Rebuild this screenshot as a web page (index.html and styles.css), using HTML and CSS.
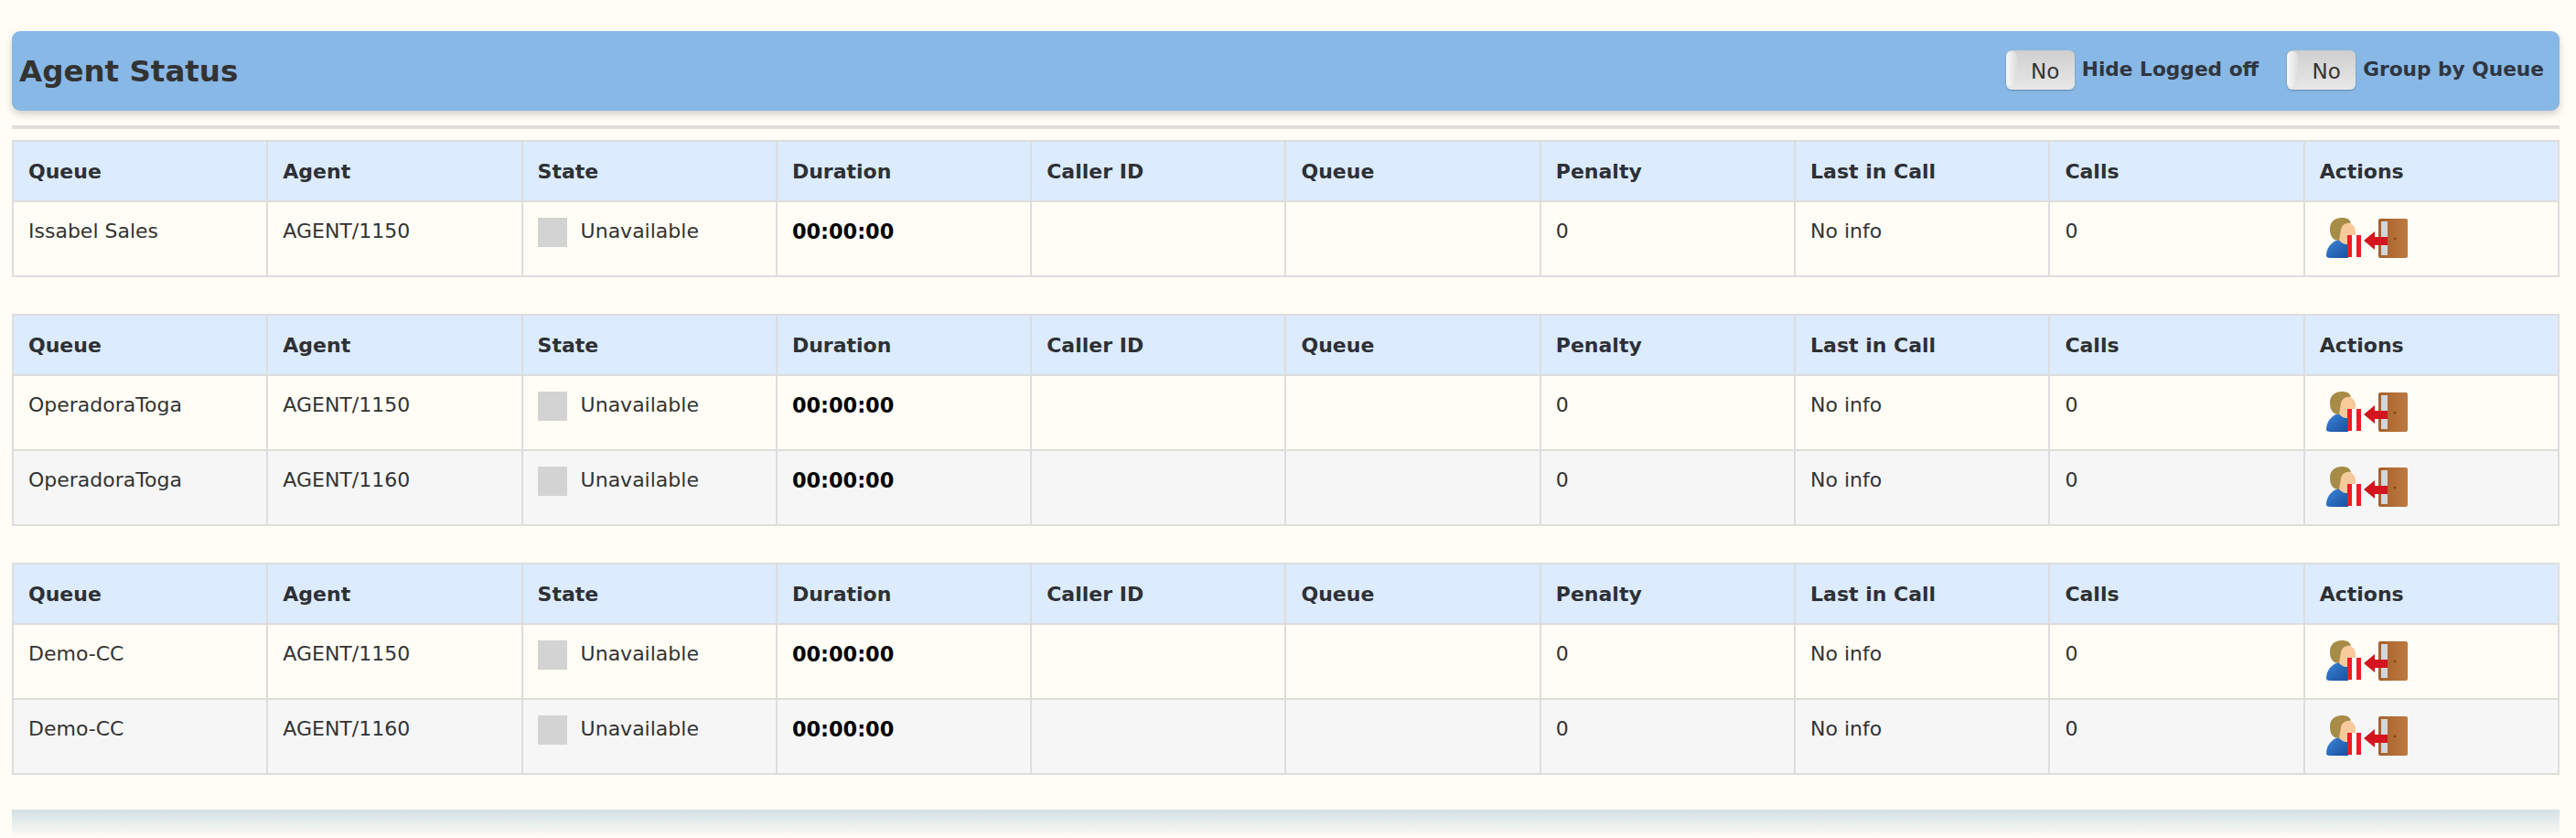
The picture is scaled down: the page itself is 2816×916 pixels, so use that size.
FILE: index.html
```html
<!DOCTYPE html>
<html lang="en">
<head>
  <meta charset="UTF-8">
  <title>Agent Status</title>
  <link rel="stylesheet" href="styles.css">
</head>
<body>
  <svg class="icon-defs" width="0" height="0">
    <defs>
      <linearGradient id="doorGrad" x1="0" x2="1" y1="0" y2="0">
        <stop offset="0" stop-color="#a5602b"/>
        <stop offset="1" stop-color="#bd7a40"/>
      </linearGradient>
      <linearGradient id="bodyGrad" x1="0" x2="1" y1="0" y2="1">
        <stop offset="0" stop-color="#3d86d8"/>
        <stop offset="1" stop-color="#174f9f"/>
      </linearGradient>
      <symbol id="logoutIcon" viewBox="0 0 92 46">
        <path d="M1 42 C1 33 6 27 14 24 L24 24 L25 44 L8 44 C4 44 2 44 1 42 Z" fill="url(#bodyGrad)"/>
        <path d="M12 14 C12 8 16 5 22 5 C28 5 33 9 33 15 L33 22 C31 27 27 29 22 29 C16 28 12 22 12 14 Z" fill="#f7c99b"/>
        <path d="M5 12 C5 4 11 0 18 0 C24 0 27 2 28 6 C22 5 18 8 17 13 L15 25 L10 24 C6 21 5 17 5 12 Z" fill="#a68c46"/>
        <path d="M24 19 H39 V43 H24 Z" fill="#fff"/>
        <path d="M24 19 H29 V43 H24 Z M34 19 H39 V43 H34 Z" fill="#ee1c25"/>
        <path d="M60 1 H88 Q90 1 90 3 V42 Q90 44 88 44 H60 Q58 44 58 42 V3 Q58 1 60 1 Z" fill="url(#doorGrad)"/>
        <path d="M61 4 H68 V41 H61 Z" fill="#d2d5da"/>
        <circle cx="76" cy="23" r="1.3" fill="#7a3f15"/>
        <path d="M42 25 L54 15 V21 H68 V30 H54 V35 Z" fill="#d4141e"/>
      </symbol>
    </defs>
  </svg>

  <div class="title-bar">
    <h1 class="title">Agent Status</h1>
    <div class="switches">
      <div class="switch-item">
        <span class="toggle"><span class="toggle-knob"></span><span class="toggle-text">No</span></span>
        <span class="switch-label">Hide Logged off</span>
      </div>
      <div class="switch-item">
        <span class="toggle"><span class="toggle-knob"></span><span class="toggle-text">No</span></span>
        <span class="switch-label">Group by Queue</span>
      </div>
    </div>
  </div>
  <hr class="rule">

  <table class="agents">
    <thead>
      <tr><th>Queue</th><th>Agent</th><th>State</th><th>Duration</th><th>Caller ID</th><th>Queue</th><th>Penalty</th><th>Last in Call</th><th>Calls</th><th>Actions</th></tr>
    </thead>
    <tbody>
      <tr>
        <td>Issabel Sales</td><td>AGENT/1150</td>
        <td><span class="state"><span class="state-box"></span>Unavailable</span></td>
        <td class="duration">00:00:00</td><td></td><td></td><td>0</td><td>No info</td><td>0</td>
        <td class="actions"><svg class="logout"><use href="#logoutIcon"/></svg></td>
      </tr>
    </tbody>
  </table>

  <table class="agents">
    <thead>
      <tr><th>Queue</th><th>Agent</th><th>State</th><th>Duration</th><th>Caller ID</th><th>Queue</th><th>Penalty</th><th>Last in Call</th><th>Calls</th><th>Actions</th></tr>
    </thead>
    <tbody>
      <tr>
        <td>OperadoraToga</td><td>AGENT/1150</td>
        <td><span class="state"><span class="state-box"></span>Unavailable</span></td>
        <td class="duration">00:00:00</td><td></td><td></td><td>0</td><td>No info</td><td>0</td>
        <td class="actions"><svg class="logout"><use href="#logoutIcon"/></svg></td>
      </tr>
      <tr>
        <td>OperadoraToga</td><td>AGENT/1160</td>
        <td><span class="state"><span class="state-box"></span>Unavailable</span></td>
        <td class="duration">00:00:00</td><td></td><td></td><td>0</td><td>No info</td><td>0</td>
        <td class="actions"><svg class="logout"><use href="#logoutIcon"/></svg></td>
      </tr>
    </tbody>
  </table>

  <table class="agents">
    <thead>
      <tr><th>Queue</th><th>Agent</th><th>State</th><th>Duration</th><th>Caller ID</th><th>Queue</th><th>Penalty</th><th>Last in Call</th><th>Calls</th><th>Actions</th></tr>
    </thead>
    <tbody>
      <tr>
        <td>Demo-CC</td><td>AGENT/1150</td>
        <td><span class="state"><span class="state-box"></span>Unavailable</span></td>
        <td class="duration">00:00:00</td><td></td><td></td><td>0</td><td>No info</td><td>0</td>
        <td class="actions"><svg class="logout"><use href="#logoutIcon"/></svg></td>
      </tr>
      <tr>
        <td>Demo-CC</td><td>AGENT/1160</td>
        <td><span class="state"><span class="state-box"></span>Unavailable</span></td>
        <td class="duration">00:00:00</td><td></td><td></td><td>0</td><td>No info</td><td>0</td>
        <td class="actions"><svg class="logout"><use href="#logoutIcon"/></svg></td>
      </tr>
    </tbody>
  </table>

  <div class="footer-band"></div>
</body>
</html>
```

FILE: styles.css
```css
html {
  height: 100%;
  overflow: hidden;
}
body {
  margin: 0;
  padding: 34px 18px 0 13px;
  background: #fffdf5;
  font-family: "DejaVu Sans", Verdana, sans-serif;
  font-size: 22px;
  color: #333;
}
.icon-defs {
  position: absolute;
}
.title-bar {
  height: 87px;
  display: flex;
  align-items: center;
  justify-content: space-between;
  padding: 0 17px 0 8px;
  background: #88b8e6;
  border-radius: 9px;
  box-shadow: 0 4px 8px rgba(0, 0, 0, 0.18);
}
.title {
  margin: 0;
  font-size: 32.5px;
  font-weight: bold;
  color: #333;
}
.switches {
  display: flex;
  gap: 31px;
  margin-bottom: 2px;
}
.switch-item {
  display: flex;
  align-items: center;
  gap: 8px;
}
.switch-label {
  font-size: 21.7px;
  font-weight: bold;
  color: #2f3640;
  margin-bottom: 2px;
}
.toggle {
  display: flex;
  width: 75px;
  height: 43px;
  box-sizing: border-box;
  border-radius: 6px;
  background: linear-gradient(to bottom, #cfcfcf, #e8e8e8);
  box-shadow: 0 1px 2px rgba(0, 0, 0, 0.25);
}
.toggle-knob {
  width: 12px;
  margin: 1px 0 3px;
  border-radius: 6px;
  background: linear-gradient(to right, #fafafa, #ddd);
}
.toggle-text {
  flex: 1;
  text-align: center;
  line-height: 46px;
  padding-right: 1px;
  font-size: 23px;
  color: #333;
}
.rule {
  height: 4px;
  margin: 16px 0 12px;
  border: 0;
  background: #e0dedc;
}
.agents {
  width: 100%;
  margin-bottom: 40px;
  table-layout: fixed;
  border-collapse: collapse;
}
.agents:last-of-type {
  margin-bottom: 38px;
}
.agents th,
.agents td {
  border: 2px solid #ddd;
  padding: 0 16px;
  text-align: left;
}
.agents th {
  height: 64px;
  background: #dcebfd;
  font-size: 22px;
  font-weight: bold;
  color: #2d3035;
}
.agents td {
  height: 63px;
  padding-top: 17px;
  vertical-align: top;
  line-height: 30px;
}
.agents tbody tr:nth-child(even) td {
  background: #f6f6f7;
}
.state {
  display: flex;
  align-items: flex-start;
  gap: 15px;
}
.state-box {
  width: 32px;
  height: 32px;
  background: #d3d3d3;
}
.agents .duration {
  font-size: 22.4px;
  font-weight: bold;
  color: #000;
}
.agents .actions {
  padding-left: 22px;
}
.logout {
  display: block;
  width: 92px;
  height: 46px;
}
.footer-band {
  height: 31px;
  background: linear-gradient(to bottom, #d3e0e5, #fffdf5);
}
```
